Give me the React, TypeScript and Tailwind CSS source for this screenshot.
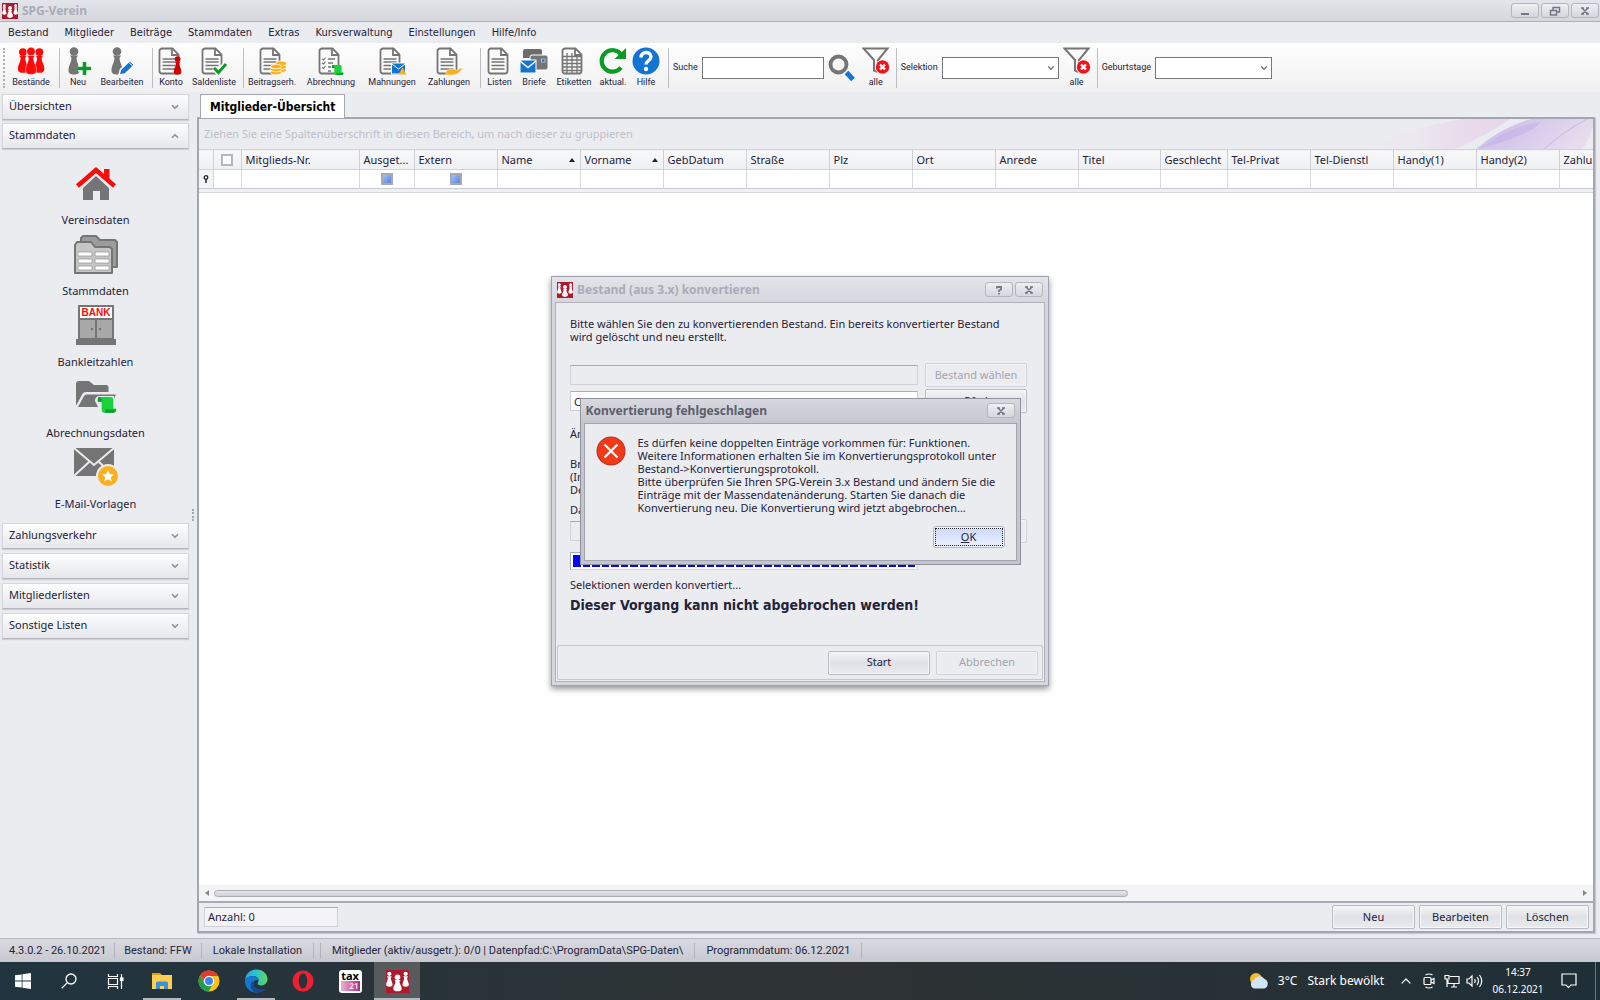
import React, { useState } from 'react'
import { ChevronDown, ChevronUp } from 'lucide-react'

const menuItems = [
  'Bestand',
  'Mitglieder',
  'Beiträge',
  'Stammdaten',
  'Extras',
  'Kursverwaltung',
  'Einstellungen',
  'Hilfe/Info'
]

const columns = [
  { title: 'Mitglieds-Nr.', width: 118 },
  { title: 'Ausget...', width: 55, check: true },
  { title: 'Extern', width: 83, check: true },
  { title: 'Name', width: 83, sorted: true },
  { title: 'Vorname', width: 83, sorted: true },
  { title: 'GebDatum', width: 83 },
  { title: 'Straße', width: 83 },
  { title: 'Plz', width: 83 },
  { title: 'Ort', width: 83 },
  { title: 'Anrede', width: 83 },
  { title: 'Titel', width: 82 },
  { title: 'Geschlecht', width: 67 },
  { title: 'Tel-Privat', width: 83 },
  { title: 'Tel-Dienstl', width: 83 },
  { title: 'Handy(1)', width: 83 },
  { title: 'Handy(2)', width: 83 },
  { title: 'Zahlungsart', width: 83 }
]

const buttonStyle =
  'rounded-[2px] border border-[#b9bac3] bg-linear-to-b from-[#f4f5f7] via-[#e0e1e6] to-[#eaebef] text-center shadow-[inset_0_0_0_1px_#f6f6f8]'
const disabledStyle =
  'rounded-[2px] border border-[#d0d1d8] bg-[#ebecf0] text-center text-[#a3a4af] shadow-[inset_0_0_0_1px_#f3f3f6]'

function Logo({ className }: { className: string }) {
  return (
    <svg viewBox="0 0 24 24" className={className}>
      <rect width="24" height="24" fill="#ad1a2d" />
      <g fill="#fff">
        <circle cx="3.5" cy="4" r="2.2" />
        <path d="M1 6.500h5l-1 2c.2 3 1.800 4 1.800 7 0 1.500-1.500 2-3.300 2-1.700 0-3.300-.5-3.300-2 0-3 1.600-4 1.800-7z" />
        <circle cx="20.500" cy="4" r="2.200" />
        <path d="M18 6.500h5l-1 2c.2 3 1.800 4 1.800 7 0 1.500-1.500 2-3.300 2-1.700 0-3.300-.5-3.300-2 0-3 1.600-4 1.800-7z" />
        <circle cx="12" cy="7.500" r="2.900" />
        <path d="M8.800 10.500h6.400l-1.200 1.800c.2 3 2.400 4 2.400 7.200 0 1.800-2 2.700-4.400 2.700s-4.400-.9-4.400-2.700c0-3.200 2.200-4.200 2.400-7.200z" />
      </g>
    </svg>
  )
}

function Pawn({ x = 0, y = 0, scale = 1, fill }: { x?: number; y?: number; scale?: number; fill: string }) {
  return (
    <g transform={`translate(${x} ${y}) scale(${scale})`} fill={fill}>
      <circle cx="6" cy="4.500" r="4.300" />
      <path d="M2 8.500h8l-1.500 2.500c.2 5 3 7 3 12.500 0 3-2.200 4-5.500 4s-5.500-1-5.500-4c0-5.500 2.800-7.500 3-12.500z" />
    </g>
  )
}

function Doc({ children, lines = true }: { children?: React.ReactNode; lines?: boolean }) {
  return (
    <svg viewBox="0 0 30 28" className="h-7 w-[30px]">
      <path
        d="M6 1.500h10.500l6 6V24a2.500 2.500 0 0 1-2.500 2.500H6A2.500 2.500 0 0 1 3.500 24V4A2.500 2.500 0 0 1 6 1.500zM16 1.500v6.500h6.500"
        fill="#fafafa"
        stroke="#757575"
        strokeWidth="1.800"
      />
      {lines && <path d="M6.500 12h13M6.500 15h13M6.500 18.500h13M6.500 22h13" stroke="#757575" strokeWidth="1.500" />}
      {children}
    </svg>
  )
}

function Scroll({ x, y, scale }: { x: number; y: number; scale: number }) {
  return (
    <g transform={`translate(${x} ${y}) scale(${scale})`}>
      <path d="M1 0h11c2 0 2.500 1 2.500 3v8H17c0 2.500-1 4-3 4H6c-2 0-2.500-1-2.500-3V4.500H0C-.5 2 0 0 1 0z" fill="#19d23a" />
      <path d="M1 0c2 0 3 1.500 2.500 4.500H0C-.5 2 0 0 1 0zM7 12h10.500c0 2-1 3-3 3H6c1 0 1.200-1 1-3z" fill="#0d9d2b" />
    </g>
  )
}

function Funnel() {
  return (
    <svg viewBox="0 0 28 29" className="h-[29px] w-7">
      <path d="M1.500 2.500h24L16 14v12l-4-1.500V14z" fill="none" stroke="#757575" strokeWidth="2" />
      <circle cx="20.500" cy="21" r="7.500" fill="#fff" />
      <circle cx="20.500" cy="21" r="6.700" fill="#f50f17" />
      <path d="M18 18.500l5 5M23 18.500l-5 5" stroke="#fff" strokeWidth="2.400" />
    </svg>
  )
}

function BestaendeIcon() {
  return (
    <svg viewBox="0 0 28 28" className="h-7 w-7">
      <Pawn x={0.5} y={1} scale={0.9} fill="#fb0a0a" />
      <Pawn x={17} y={1} scale={0.9} fill="#fb0a0a" />
      <g stroke="#fff" strokeWidth="0.500">
        <Pawn x={8} y={0} scale={1} fill="#fb0a0a" />
      </g>
    </svg>
  )
}

function NeuIcon() {
  return (
    <svg viewBox="0 0 28 28" className="h-7 w-7">
      <Pawn x={4} fill="#757575" />
      <path d="M20.500 15v13M14 21.500h13" stroke="#fff" strokeWidth="6" />
      <path d="M20.500 15v13M14 21.500h13" stroke="#0b9b25" strokeWidth="3.600" />
    </svg>
  )
}

function BearbeitenIcon() {
  return (
    <svg viewBox="0 0 28 28" className="h-7 w-7">
      <Pawn x={3} fill="#757575" />
      <path d="M11 28l1.500-5.500L22 13.500l4.500 4.500L17 27z" fill="#1474d4" stroke="#fff" strokeWidth="1.500" />
      <path d="M21 15.500l4 4" stroke="#fff" strokeWidth="1" />
    </svg>
  )
}

function Coins() {
  return (
    <g fill="#fbb01b" stroke="#fff" strokeWidth="0.800">
      <ellipse cx="24" cy="23" rx="5.500" ry="2.500" />
      <ellipse cx="24" cy="20" rx="5.500" ry="2.500" />
      <ellipse cx="24" cy="16.500" rx="5.500" ry="2.500" />
      <ellipse cx="19" cy="25.500" rx="5.500" ry="2.300" />
      <ellipse cx="19" cy="22.500" rx="5.500" ry="2.300" />
      <ellipse cx="19" cy="19.500" rx="5.500" ry="2.300" />
    </g>
  )
}

function BriefeIcon() {
  return (
    <svg viewBox="0 0 28 28" className="h-7 w-7">
      <path d="M5 2h15a2 2 0 0 1 2 2v7H3V4a2 2 0 0 1 2-2z" fill="#6c6c6c" />
      <rect x="10" y="8" width="18" height="15" rx="2" fill="#757575" stroke="#fff" />
      <rect x="21.500" y="12" width="3.500" height="3" fill="#1474d4" stroke="#fff" strokeWidth="0.500" />
      <rect x="0" y="13" width="16" height="13" fill="#1474d4" stroke="#fff" />
      <path d="M0 14l8 6.500 8-6.500" fill="none" stroke="#fff" strokeWidth="1.500" />
    </svg>
  )
}

function RefreshIcon() {
  return (
    <svg viewBox="0 0 28 28" className="h-7 w-7">
      <path d="M22 20.500A10.800 10.800 0 1 1 22.500 8" fill="none" stroke="#0b9b25" strokeWidth="4.200" />
      <path d="M27 1v11H15.500z" fill="#0b9b25" />
    </svg>
  )
}

function HilfeIcon() {
  return (
    <svg viewBox="0 0 28 28" className="h-7 w-7">
      <circle cx="14" cy="14" r="13.500" fill="#1474d4" />
      <path d="M9 10.500c0-6.500 10-6.500 10-.7 0 3.700-5 4.200-5 7.700" fill="none" stroke="#fff" strokeWidth="3.400" />
      <circle cx="14" cy="22" r="2.200" fill="#fff" />
    </svg>
  )
}

const toolGroups = [
  [{ label: 'Bestände', width: 'w-[48px]', icon: <BestaendeIcon /> }],
  [
    { label: 'Neu', width: 'w-[36px]', icon: <NeuIcon /> },
    { label: 'Bearbeiten', width: 'w-[52px]', icon: <BearbeitenIcon /> }
  ],
  [
    {
      label: 'Konto',
      width: 'w-[36px]',
      icon: (
        <Doc>
          <Pawn x={17.5} y={9} scale={0.68} fill="#d40000" />
        </Doc>
      )
    },
    {
      label: 'Saldenliste',
      width: 'w-[50px]',
      icon: (
        <Doc>
          <path d="M15 21l4.500 4.500L27 17" fill="none" stroke="#fff" strokeWidth="6" />
          <path d="M15 21l4.500 4.500L27 17" fill="none" stroke="#0b9b25" strokeWidth="3" />
        </Doc>
      )
    }
  ],
  [
    { label: 'Beitragserh.', width: 'w-[56px]', icon: <Doc><Coins /></Doc> },
    {
      label: 'Abrechnung',
      width: 'w-[62px]',
      icon: (
        <Doc lines={false}>
          <path d="M12 12h7M12 16h5M12 20h3M12 24h3" stroke="#757575" strokeWidth="1.500" />
          <path d="M6 12l1.500 1 2-2.500M6 16l1.500 1 2-2.500M6 20.500l1.500 1 2-2.500" fill="none" stroke="#757575" strokeWidth="1.200" />
          <Scroll x={16} y={18} scale={0.66} />
        </Doc>
      )
    },
    {
      label: 'Mahnungen',
      width: 'w-[60px]',
      icon: (
        <Doc>
          <rect x="14.500" y="16" width="14" height="11" fill="#1474d4" stroke="#fff" />
          <path d="M15 17l6.500 5 6.500-5" fill="none" stroke="#fff" />
          <path d="M25.500 20.500l4 7h-8z" fill="#fbb01b" />
        </Doc>
      )
    },
    {
      label: 'Zahlungen',
      width: 'w-[54px]',
      icon: (
        <Doc>
          <path d="M12 24l4-2h5.500l.5 1.500 5-2.500 2 .5-5 5-5 1.500h-7z" fill="#fbb01b" stroke="#fff" strokeWidth="0.500" />
        </Doc>
      )
    }
  ],
  [
    { label: 'Listen', width: 'w-[37px]', icon: <Doc /> },
    { label: 'Briefe', width: 'w-[32px]', icon: <BriefeIcon /> },
    {
      label: 'Etiketten',
      width: 'w-[48px]',
      icon: (
        <Doc lines={false}>
          <path d="M4 9.500h18M4 13h18M4 16.500h18M4 20h18M4 23.500h18M8 6v20M13 6v20M18 9v17" stroke="#757575" strokeWidth="1.300" />
        </Doc>
      )
    },
    { label: 'aktual.', width: 'w-[30px]', icon: <RefreshIcon /> },
    { label: 'Hilfe', width: 'w-[36px]', icon: <HilfeIcon /> }
  ]
]

const sideItems = [
  {
    label: 'Vereinsdaten',
    icon: (
      <svg viewBox="0 0 48 48" className="size-12">
        <path d="M11 28L24 16l13 12v12h-9v-9h-7v9H11z" fill="#757575" />
        <path d="M5.500 26L24 10l18.500 16" fill="none" stroke="#fb0a0a" strokeWidth="4.500" />
        <path d="M32 9h5.500v12L32 17z" fill="#fb0a0a" />
      </svg>
    )
  },
  {
    label: 'Stammdaten',
    icon: (
      <svg viewBox="0 0 48 48" className="size-12" stroke="#757575" strokeWidth="2" strokeLinejoin="round">
        <path d="M9 12V7l2-2h13l4 4h15l2 2v25H39" fill="#9c9c9c" />
        <path d="M3 42V14l2-3h14l4 5h15l2 2v24z" fill="#c6c6c6" />
        <g fill="#fff" stroke="#999" strokeWidth="0.800">
          <rect x="6" y="21" width="14" height="4" />
          <rect x="23" y="21" width="14" height="4" />
          <rect x="6" y="28" width="14" height="4" />
          <rect x="23" y="28" width="14" height="4" />
          <rect x="6" y="35" width="14" height="4" />
          <rect x="23" y="35" width="14" height="4" />
        </g>
      </svg>
    )
  },
  {
    label: 'Bankleitzahlen',
    icon: (
      <svg viewBox="0 0 48 48" className="size-12">
        <path d="M6 3h36v34h2v6H4v-6h2z" fill="#757575" />
        <rect x="8" y="5" width="32" height="11" fill="#fff" />
        <rect x="8" y="18" width="15" height="18" fill="#a8a8a8" />
        <rect x="25" y="18" width="15" height="18" fill="#a8a8a8" />
        <circle cx="20" cy="27" r="1.300" fill="#757575" />
        <circle cx="28" cy="27" r="1.300" fill="#757575" />
        <text x="24" y="14" textAnchor="middle" fontSize="10" fontWeight="bold" fontFamily="Liberation Sans" fill="#fb0a0a">
          BANK
        </text>
      </svg>
    )
  },
  {
    label: 'Abrechnungsdaten',
    icon: (
      <svg viewBox="0 0 48 48" className="size-12">
        <path d="M4 34V11q0-3 3-3h10l5 4h12q2.500 0 2.500 3v4H14q-3 0-4 3z" fill="#757575" />
        <path d="M3.500 35L11 22q1-1.500 3-1.500h29" fill="none" stroke="#ebecf0" strokeWidth="1.500" />
        <path d="M6 34l6-11q1-1.500 3-1.500h29L38 34z" fill="#757575" />
        <path d="M23 28q0-5 5-5h14v13H27z" fill="#ebecf0" />
        <Scroll x={26} y={24} scale={1.05} />
      </svg>
    )
  },
  {
    label: 'E-Mail-Vorlagen',
    icon: (
      <svg viewBox="0 0 48 48" className="size-12">
        <rect x="2" y="4" width="40" height="28" fill="#757575" />
        <path d="M2 4l20 17L42 4M2 32l15-14M42 32L27 18" fill="none" stroke="#ebecf0" strokeWidth="2" />
        <circle cx="36" cy="32" r="12" fill="#ebecf0" />
        <circle cx="36" cy="32" r="10" fill="#fbb01b" />
        <path d="M36 26l1.800 4 4.200.4-3.200 2.800 1 4.200-3.800-2.200-3.800 2.200 1-4.200-3.200-2.800 4.200-.4z" fill="#fff" />
      </svg>
    )
  }
]

function Separator() {
  return <div className="h-10 w-px bg-[#bdbdc2]" />
}

function WindowButton({ label, children }: { label: string; children: React.ReactNode }) {
  return (
    <button
      aria-label={label}
      className="flex h-[15px] w-7 items-center justify-center rounded-[3px] border border-[#b4b5bf] bg-linear-to-b from-[#eeeff2] to-[#d6d7dd]"
    >
      <svg viewBox="0 0 12 10" className="h-[10px] w-3" fill="none" stroke="#757783" strokeWidth="2">
        {children}
      </svg>
    </button>
  )
}

const closeGlyph = <path d="M3 2l6 6M9 2L3 8M2 2h3M7 2h3M2 8h3M7 8h3" strokeWidth="1.500" />

function GroupHeader({ title, open, onClick }: { title: string; open?: boolean; onClick?: () => void }) {
  const Chevron = open ? ChevronUp : ChevronDown
  return (
    <button
      onClick={onClick}
      className="flex h-[26px] w-full items-center justify-between border border-[#d6d7dd] border-b-[#b4b5be] bg-linear-to-b from-[#fdfdfd] to-[#e6e7eb] pr-2 pb-px pl-[6px] text-left shadow-[0_1px_1px_#cfd0d6]"
    >
      {title}
      <Chevron className="size-[10px] text-[#8e909a]" strokeWidth={4} />
    </button>
  )
}

function Combo({ label }: { label: string }) {
  return (
    <label className="flex items-center gap-1">
      {label}
      <span className="relative block">
        <select className="h-[22px] w-[117px] appearance-none border border-[#77787c] bg-white px-1">
          <option></option>
        </select>
        <ChevronDown className="pointer-events-none absolute top-[6px] right-[3px] size-[10px] text-[#777]" strokeWidth={3} />
      </span>
    </label>
  )
}

function Toolbar() {
  return (
    <div className="flex h-[49px] items-center bg-linear-to-b from-[#fefefe] to-[#f0f0f1] font-[Roboto,sans-serif] text-[9px] whitespace-nowrap">
      <div className="mr-[2px] ml-[3px] h-10 border-l-2 border-dotted border-[#b0b0b4]" />
      {toolGroups.map((group, index) => (
        <React.Fragment key={index}>
          <div className="flex pr-1">
            {group.map(tool => (
              <button key={tool.label} className={`flex flex-col items-center ${tool.width}`}>
                {tool.icon}
                <span className="leading-[14px]">{tool.label}</span>
              </button>
            ))}
          </div>
          <Separator />
        </React.Fragment>
      ))}
      <label className="ml-1 flex items-center gap-1">
        Suche
        <input type="text" className="h-[22px] w-[122px] border border-[#77787c] bg-white px-1" />
      </label>
      <button aria-label="Suchen" className="ml-1">
        <svg viewBox="0 0 28 28" className="size-7">
          <circle cx="10.500" cy="10.500" r="8" fill="none" stroke="#757575" strokeWidth="3.800" />
          <path d="M18.500 18.500l6.500 7" stroke="#1474d4" strokeWidth="5" />
        </svg>
      </button>
      <button className="mx-[6px] flex flex-col items-center">
        <Funnel />
        <span className="leading-[14px]">alle</span>
      </button>
      <Separator />
      <div className="ml-1">
        <Combo label="Selektion" />
      </div>
      <button className="mr-[6px] ml-1 flex flex-col items-center">
        <Funnel />
        <span className="leading-[14px]">alle</span>
      </button>
      <Separator />
      <div className="ml-1">
        <Combo label="Geburtstage" />
      </div>
    </div>
  )
}

function Sidebar() {
  const [open, setOpen] = useState(true)
  return (
    <aside className="w-[189px] shrink-0 pt-[2px] pl-[2px]">
      <div className="flex flex-col gap-[3px]">
        <GroupHeader title="Übersichten" />
        <GroupHeader title="Stammdaten" open={open} onClick={() => setOpen(!open)} />
      </div>
      {open && (
        <div className="pt-[11px] pb-2">
          {sideItems.map(item => (
            <button key={item.label} className="flex h-[71px] w-full flex-col items-center">
              {item.icon}
              <span className="leading-[23px]">{item.label}</span>
            </button>
          ))}
        </div>
      )}
      <div className="flex flex-col gap-1">
        <GroupHeader title="Zahlungsverkehr" />
        <GroupHeader title="Statistik" />
        <GroupHeader title="Mitgliederlisten" />
        <GroupHeader title="Sonstige Listen" />
      </div>
    </aside>
  )
}

function Swirl() {
  return (
    <svg viewBox="0 0 240 31" className="h-[31px] w-60">
      <defs>
        <linearGradient id="pink" x1="0" x2="1">
          <stop offset="0" stopColor="#ebecf0" />
          <stop offset="0.400" stopColor="#ebe8ef" />
          <stop offset="0.700" stopColor="#e9dcec" />
          <stop offset="1" stopColor="#e6d6eb" />
        </linearGradient>
        <linearGradient id="violet" x1="0" y1="0" x2="1" y2="0.300">
          <stop offset="0" stopColor="#cfc0ea" />
          <stop offset="0.400" stopColor="#d2c6ea" />
          <stop offset="1" stopColor="#e6dcee" />
        </linearGradient>
      </defs>
      <path d="M0 31Q60 8 110 0h47Q135 16 100 31z" fill="url(#pink)" />
      <path d="M122 31Q148 8 178 0h62v8q-4 14-12 23z" fill="url(#violet)" />
      <path d="M128 29Q154 8 188 3q-10 13-60 26z" fill="#c3b0e8" opacity="0.600" />
      <path d="M190 31q20-18 44-31" stroke="#d3bde2" strokeWidth="1.200" fill="none" />
    </svg>
  )
}

function FilterCheck({ label }: { label: string }) {
  return (
    <input
      type="checkbox"
      aria-label={label}
      className="mx-auto block size-3 appearance-none border-2 border-[#a6a9b6] bg-linear-to-br from-[#a5c1f5] to-[#5a82d8]"
    />
  )
}

function MemberGrid() {
  return (
    <table className="w-full table-fixed border-collapse">
      <colgroup>
        <col className="w-[14px]" />
        <col className="w-7" />
        {columns.map(column => (
          <col key={column.title} style={{ width: column.width }} />
        ))}
      </colgroup>
      <thead>
        <tr className="h-5 border-y border-[#d3d4da] bg-linear-to-b from-[#f8f8f9] to-[#eff0f3]">
          <th className="border-r border-[#cfd0d7]"></th>
          <th className="border-r border-[#cfd0d7]">
            <input
              type="checkbox"
              aria-label="Alle auswählen"
              className="mx-auto block size-3 appearance-none border-2 border-[#b5b6be] bg-white"
            />
          </th>
          {columns.map(column => (
            <th key={column.title} className="overflow-hidden border-r border-[#cfd0d7] pr-[5px] pl-1 text-left leading-4 font-normal whitespace-nowrap">
              <span className="flex items-center justify-between">
                {column.title}
                {column.sorted && (
                  <svg viewBox="0 0 6 4" className="h-1 w-[6px]">
                    <path d="M3 0l3 4H0z" fill="#23232f" />
                  </svg>
                )}
              </span>
            </th>
          ))}
        </tr>
      </thead>
      <tbody>
        <tr className="h-[19px] border-b border-[#c9cad2]">
          <td className="border-r border-[#d8d9df] bg-[#f3f4f6]">
            <svg viewBox="0 0 8 8" className="mx-auto size-2">
              <circle cx="4" cy="2.500" r="1.800" fill="none" stroke="#23232f" strokeWidth="1.300" />
              <path d="M4 4v4" stroke="#23232f" strokeWidth="1.500" />
            </svg>
          </td>
          <td className="border-r border-[#d8d9df]"></td>
          {columns.map(column => (
            <td key={column.title} className="border-r border-[#d8d9df]">
              {column.check && <FilterCheck label={column.title} />}
            </td>
          ))}
        </tr>
      </tbody>
    </table>
  )
}

function MainPanel() {
  return (
    <main className="flex min-w-0 flex-1 flex-col pr-[5px] pb-[5px]">
      <div className="pl-[3px]">
        <button className="relative top-px mt-px h-6 border border-b-0 border-[#a5a7b2] bg-white px-[9px] font-['DejaVu_Sans_Condensed',sans-serif] text-[12px] font-bold text-black">
          Mitglieder-Übersicht
        </button>
      </div>
      <section className="flex flex-1 flex-col border-2 border-[#a3a5b0] bg-white shadow-[1px_1px_1px_#c9cad0]">
        <div className="flex h-[30px] items-center justify-between overflow-hidden bg-[#ebecf0] pl-[5px] text-[#bfc0c9]">
          Ziehen Sie eine Spaltenüberschrift in diesen Bereich, um nach dieser zu gruppieren
          <Swirl />
        </div>
        <div className="overflow-hidden">
          <MemberGrid />
        </div>
        <div className="h-1 border-b border-[#d8d9df] bg-[#eff0f3]" />
        <div className="flex-1" />
        <div className="flex h-4 items-center gap-[5px] bg-[#f4f4f6] px-[6px]">
          <svg viewBox="0 0 4 6" className="h-[6px] w-1">
            <path d="M4 0v6L0 3z" fill="#85868f" />
          </svg>
          <div className="flex-1">
            <div className="h-[7px] w-[67%] rounded-full border border-[#a9abb5] bg-linear-to-b from-[#e4e5ea] to-[#d0d1d8]" />
          </div>
          <svg viewBox="0 0 4 6" className="h-[6px] w-1">
            <path d="M0 0v6l4-3z" fill="#85868f" />
          </svg>
        </div>
        <div className="flex h-[30px] items-center gap-1 border-t-2 border-[#a9abb6] bg-[#ebecf0] pr-1 pl-[5px]">
          <div className="mr-auto h-5 w-[134px] border border-[#d0d1d8] border-t-[#a9abb5] bg-[#f4f4f7] px-[3px] leading-[18px]">Anzahl: 0</div>
          <button className={`${buttonStyle} h-6 w-[83px]`}>Neu</button>
          <button className={`${buttonStyle} h-6 w-[83px]`}>Bearbeiten</button>
          <button className={`${buttonStyle} h-6 w-[83px]`}>Löschen</button>
        </div>
      </section>
    </main>
  )
}

function ConvertDialog() {
  return (
    <div
      role="dialog"
      aria-label="Bestand (aus 3.x) konvertieren"
      className="col-start-1 row-start-1 w-[498px] border border-[#a2a3ae] bg-linear-to-b from-[#e3e4e9] to-[#d6d7dd] to-[26px] px-[3px] pb-[3px] shadow-[0_3px_6px_#0000006b]"
    >
      <div className="flex h-[25px] items-center gap-[2px] pr-[2px] pl-[2px]">
        <Logo className="size-4" />
        <h2 className="ml-[2px] flex-1 text-[12px] font-bold text-[#a9abb7]">Bestand (aus 3.x) konvertieren</h2>
        <WindowButton label="Hilfe">
          <path d="M4 3.500V2h4v2.500L6 5.500V7M6 8v1.500" strokeWidth="1.800" />
        </WindowButton>
        <WindowButton label="Schließen">{closeGlyph}</WindowButton>
      </div>
      <div className="border border-[#b0b1bb] bg-[#ebecf0]">
        <div className="h-[341px] px-[14px] pt-[14px]">
          <p className="leading-[13px]">
            Bitte wählen Sie den zu konvertierenden Bestand. Ein bereits konvertierter Bestand
            <br />
            wird gelöscht und neu erstellt.
          </p>
          <div className="mt-5 flex items-center gap-[7px]">
            <input aria-label="Bestand" disabled className="h-5 min-w-0 flex-1 border border-[#d0d1d8] border-t-[#a9abb5] bg-[#ebecf0] px-1" />
            <button disabled className={`${disabledStyle} mr-[3px] h-6 w-[102px]`}>
              Bestand wählen
            </button>
          </div>
          <div className="mt-[2px] flex items-center gap-[7px]">
            <input
              aria-label="Zielpfad"
              defaultValue="C:\ProgramData\SPG-Daten\Bestand\Verein"
              className="h-5 min-w-0 flex-1 border border-[#d0d1d8] border-t-[#a9abb5] bg-white px-[3px]"
            />
            <button className={`${buttonStyle} mr-[3px] h-6 w-[102px]`}>Pfad</button>
          </div>
          <p className="mt-[14px] leading-[14px]">Ändern</p>
          <p className="mt-4 leading-[13px]">
            Brief
            <br />
            (Info)
            <br />
            Deckblatt
          </p>
          <p className="mt-[7px] leading-[13px]">Datei</p>
          <div className="mt-[3px] flex items-center gap-[7px]">
            <input aria-label="Datei" disabled className="h-5 min-w-0 flex-1 border border-[#d0d1d8] border-t-[#a9abb5] bg-[#ebecf0] px-1" />
            <button disabled className={`${disabledStyle} mr-[3px] h-6 w-[102px]`}></button>
          </div>
          <div
            role="progressbar"
            aria-label="Konvertierung"
            className="mt-[9px] mr-[112px] flex h-[18px] gap-[2px] border border-[#d5d6dc] border-t-[#a9abb5] border-l-[#a9abb5] bg-white p-[2px]"
          >
            {Array.from({ length: 36 }, (_, i) => (
              <span key={i} className="flex-1 bg-[#0505f5]" />
            ))}
          </div>
          <p className="mt-2 leading-[14px]">Selektionen werden konvertiert...</p>
          <p className="mt-1 font-['DejaVu_Sans_Condensed',sans-serif] text-[14px] leading-[18px] font-bold">
            Dieser Vorgang kann nicht abgebrochen werden!
          </p>
        </div>
        <div className="m-px flex h-[35px] items-center justify-end gap-[6px] rounded-[2px] border border-[#c6c7cf] pr-1">
          <button className={`${buttonStyle} h-6 w-[102px]`}>Start</button>
          <button disabled className={`${disabledStyle} h-6 w-[102px]`}>
            Abbrechen
          </button>
        </div>
      </div>
    </div>
  )
}

function ErrorDialog() {
  return (
    <div
      role="alertdialog"
      aria-label="Konvertierung fehlgeschlagen"
      className="col-start-1 row-start-1 w-[441px] border border-[#8f919d] bg-linear-to-b from-[#d8d9df] to-[#c4c5ce] to-[25px] px-[3px] pb-[3px]"
    >
      <div className="flex h-[24px] items-center justify-between px-[2px]">
        <h2 className="text-[12px] font-bold text-[#5c5e6d]">Konvertierung fehlgeschlagen</h2>
        <WindowButton label="Schließen">{closeGlyph}</WindowButton>
      </div>
      <div className="flex flex-col border border-[#a2a4b0] bg-[#ebecf0] px-[11px] py-3">
        <div className="flex gap-3">
          <svg viewBox="0 0 30 30" className="size-[30px]">
            <circle cx="15" cy="15" r="14.500" fill="#b8342a" />
            <circle cx="15" cy="15" r="13.500" fill="#f23a18" />
            <path d="M8.500 8.500l13 13M21.500 8.500l-13 13" stroke="#fff" strokeWidth="2.200" />
          </svg>
          <p className="leading-[13px] whitespace-nowrap">
            Es dürfen keine doppelten Einträge vorkommen für: Funktionen.
            <br />
            Weitere Informationen erhalten Sie im Konvertierungsprotokoll unter
            <br />
            Bestand-&gt;Konvertierungsprotokoll.
            <br />
            Bitte überprüfen Sie Ihren SPG-Verein 3.x Bestand und ändern Sie die
            <br />
            Einträge mit der Massendatenänderung. Starten Sie danach die
            <br />
            Konvertierung neu. Die Konvertierung wird jetzt abgebrochen...
          </p>
        </div>
        <button className="mt-3 h-[22px] w-[72px] self-end rounded-[3px] border border-[#b4b5bf] bg-[#f4f6fd] p-px">
          <span className="block border border-dotted border-[#23232f] bg-linear-to-b from-[#cddafb] to-[#e9effe] leading-4">
            <u>O</u>K
          </span>
        </button>
      </div>
    </div>
  )
}

function StatusBar() {
  return (
    <footer className="flex h-6 items-center border-t border-[#b7b8c1] bg-linear-to-b from-[#d9dae0] to-[#c8c9d0] pt-px pl-[9px] font-[Roboto,sans-serif] whitespace-nowrap">
      <span className="border-r border-[#b2b3bd] pr-2">4.3.0.2 - 26.10.2021</span>
      <span className="border-r border-[#b2b3bd] px-[9px]">Bestand: FFW</span>
      <span className="border-r border-[#b2b3bd] px-[11px]">Lokale Installation</span>
      <span className="ml-[6px] border-x border-[#b2b3bd] px-[11px]">
        Mitglieder (aktiv/ausgetr.): 0/0 | Datenpfad:C:\ProgramData\SPG-Daten\
      </span>
      <span className="border-r border-[#b2b3bd] px-[11px]">Programmdatum: 06.12.2021</span>
    </footer>
  )
}

function TaskButton({ label, running, active, children }: { label: string; running?: boolean; active?: boolean; children: React.ReactNode }) {
  return (
    <button aria-label={label} className={`relative flex h-full w-[46px] items-center justify-center ${active ? 'bg-[#575b5d]' : ''}`}>
      {children}
      {running && <span className="absolute inset-x-1 bottom-0 h-[2px] bg-[#b3b9bc]" />}
      {active && <span className="absolute inset-x-0 bottom-0 h-[2px] bg-[#b3b9bc]" />}
    </button>
  )
}

function Taskbar() {
  return (
    <nav className="flex h-[38px] items-center bg-linear-to-r from-[#20343f] via-[#2f3333] to-[#1f2f37] font-['Noto_Sans',sans-serif] text-white">
      <TaskButton label="Start">
        <svg viewBox="0 0 16 16" className="size-4" fill="#fff">
          <path d="M0 2.300l6.700-.9v6.200H0zM7.500 1.300L16 0v7.600H7.500zM0 8.400h6.700v6.200L0 13.700zM7.500 8.400H16V16l-8.500-1.300z" />
        </svg>
      </TaskButton>
      <TaskButton label="Suche">
        <svg viewBox="0 0 16 16" className="size-4" fill="none" stroke="#fff" strokeWidth="1.300">
          <circle cx="10" cy="6" r="5" />
          <path d="M6.400 9.600L.7 15.300" />
        </svg>
      </TaskButton>
      <TaskButton label="Aktive Anwendungen">
        <svg viewBox="0 0 17 17" className="size-[17px]" fill="none" stroke="#fff" strokeWidth="1.200">
          <path d="M1.500 1v2.500h9V1M1.500 16v-2.500h9V16M1.500 5.500h9v6h-9zM14.500 1v4M14.500 8v8" />
          <rect x="13.500" y="5" width="2.500" height="2.500" fill="#fff" />
        </svg>
      </TaskButton>
      <div className="ml-px flex h-full gap-px">
        <TaskButton label="Explorer" running>
          <svg viewBox="0 0 22 20" className="h-5 w-[22px]">
            <path d="M1 2h8l2 2h10v5H1z" fill="#e59b0c" />
            <path d="M1 4h20v14H1z" fill="#fccf52" />
            <path d="M5 18v-6q0-1.500 1.500-1.500h9q1.500 0 1.500 1.500v6h-4v-3H9v3z" fill="#3c91dc" />
          </svg>
        </TaskButton>
        <TaskButton label="Chrome">
          <svg viewBox="0 0 22 22" className="size-[22px]">
            <circle cx="11" cy="11" r="10.500" fill="#fbc116" />
            <path d="M2 5.500A10.500 10.500 0 0 1 20.200 6H11a5 5 0 0 0-4.700 6z" fill="#e33b2e" />
            <path d="M2 5.500A10.500 10.500 0 0 0 10.500 21.500L15 14a5 5 0 0 1-8.300-.5z" fill="#229d4c" />
            <circle cx="11" cy="11" r="5.200" fill="#fff" />
            <circle cx="11" cy="11" r="4" fill="#3e83f0" />
          </svg>
        </TaskButton>
        <TaskButton label="Edge" running>
          <svg viewBox="0 0 24 24" className="size-6">
            <defs>
              <linearGradient id="edgeTop" x1="0" x2="1">
                <stop offset="0" stopColor="#2aa9e6" />
                <stop offset="0.500" stopColor="#2dc3cf" />
                <stop offset="1" stopColor="#62d857" />
              </linearGradient>
            </defs>
            <path d="M1 11C2 4 7 .5 12.500.5 19 .5 23.500 5 23.500 10c0 4-3 6.500-6.500 6.500-3 0-4-1.500-3-3C16 10 13 7 9 7 5 7 2 9 1 11z" fill="url(#edgeTop)" />
            <path d="M1 11C2 9 5 7 9 7c3.500 0 5.500 2 5.500 4.500C12 10 9.500 12 9.500 15c0 4 4 6.500 8 6 2 0 3-.6 4-1C20 22 16.500 23.500 12.500 23.500 5 23.500.5 17.500 1 11z" fill="#1577cf" />
            <path d="M9.500 15c0 4 5 6.500 12 5-3 3.500-8 4-11.500 3C6 21 5 14 9.500 11.500z" fill="#114d97" />
          </svg>
        </TaskButton>
        <TaskButton label="Opera">
          <svg viewBox="0 0 22 22" className="size-[22px]">
            <path d="M11 .5a10.500 10.500 0 1 0 0 21 10.500 10.500 0 0 0 0-21zm0 3c2.700 0 4.200 3.500 4.200 7.500s-1.500 7.500-4.200 7.500S6.800 15 6.800 11 8.300 3.500 11 3.500z" fill="#f2202f" fillRule="evenodd" />
          </svg>
        </TaskButton>
        <TaskButton label="tax 2021">
          <span className="flex h-[23px] w-[23px] flex-col items-center rounded-[3px] bg-white text-[11px] leading-[11px] font-bold text-black">
            tax
            <span className="w-[19px] bg-linear-to-r from-[#e7b3d4] to-[#b0257e] pr-px text-right text-[8px] leading-[10px] text-[#f3d5e7]">21</span>
          </span>
        </TaskButton>
        <TaskButton label="SPG-Verein" active>
          <Logo className="size-[23px]" />
        </TaskButton>
      </div>
      <div className="ml-auto flex h-full items-center">
        <button className="flex items-center text-[12px]">
          <svg viewBox="0 0 20 16" className="h-4 w-5">
            <circle cx="7" cy="6" r="6" fill="#fbb928" />
            <path d="M5 15.500a4.500 4.500 0 0 1 0-8.500 6 6 0 0 1 10.500-1A5 5 0 0 1 15 15.500z" fill="#cfe6fa" />
          </svg>
          <span className="ml-[9px]">3°C</span>
          <span className="ml-[10px]">Stark bewölkt</span>
        </button>
        <ChevronUp className="ml-[14px] size-4" strokeWidth={1.8} />
        <svg viewBox="0 0 14 16" className="ml-2 h-4 w-[14px]" fill="none" stroke="#fff" strokeWidth="1.200">
          <rect x="2" y="4.500" width="7" height="7" rx="1" />
          <path d="M9 7l3-1.500v5L9 9M3.500 2q3.500-2 7 0M3.500 14q3.500 2 7 0" />
        </svg>
        <svg viewBox="0 0 16 14" className="ml-2 h-[14px] w-4" fill="none" stroke="#fff" strokeWidth="1.200">
          <path d="M6 2.500h9v7H4V6M7 13h6M10 9.500V13M1 1.500h4V5H1zM3 5v8" />
        </svg>
        <svg viewBox="0 0 17 14" className="ml-[6px] h-[14px] w-[17px]" fill="none" stroke="#fff" strokeWidth="1.200">
          <path d="M1 5h2l3-3v10L3 9H1zM8.500 5q1.500 2 0 4M11 3q3 4 0 8M13.500 1q4.500 6 0 12" />
        </svg>
        <time className="ml-2 w-[54px] text-center text-[10px] leading-[17px]">
          14:37
          <br />
          06.12.2021
        </time>
        <button aria-label="Benachrichtigungen" className="mr-[18px] ml-4">
          <svg viewBox="0 0 16 16" className="size-4" fill="none" stroke="#fff" strokeWidth="1.200">
            <path d="M1 1h14v11h-5l-2.500 2.500L5 12H1z" />
          </svg>
        </button>
        <div className="mr-1 h-full w-px bg-[#6b757a]" />
      </div>
    </nav>
  )
}

export default function App() {
  return (
    <div className="flex min-h-screen flex-col overflow-hidden bg-[#ebecf0] font-['Noto_Sans',sans-serif] text-[11px] text-[#23233a]">
      <div className="relative flex flex-1 flex-col">
        <header className="flex h-[22px] items-center gap-[2px] border-b border-[#adaeb7] bg-linear-to-b from-[#e4e5ea] to-[#d6d7dd] pr-px pl-[2px]">
          <Logo className="size-4" />
          <h1 className="ml-[2px] flex-1 text-[12px] font-bold text-[#a9abb7]">SPG-Verein</h1>
          <WindowButton label="Minimieren">
            <path d="M2 8h8" />
          </WindowButton>
          <WindowButton label="Wiederherstellen">
            <path d="M4 4V1.500h6.500V6H8M1.500 4.500H7.500V9H1.500z" strokeWidth="1.500" />
          </WindowButton>
          <WindowButton label="Schließen">{closeGlyph}</WindowButton>
        </header>
        <div className="flex h-[21px] items-center gap-4 pt-[2px] pl-2 font-['DejaVu_Sans_Condensed',sans-serif]">
          {menuItems.map(item => (
            <button key={item}>{item}</button>
          ))}
        </div>
        <Toolbar />
        <div className="flex flex-1">
          <Sidebar />
          <div className="flex w-2 shrink-0 items-center justify-center">
            <div className="h-3 border-l-2 border-dotted border-[#a3a4ad]" />
          </div>
          <MainPanel />
        </div>
        <StatusBar />
        <div className="absolute inset-0 grid place-content-center place-items-center">
          <ConvertDialog />
          <ErrorDialog />
        </div>
      </div>
      <Taskbar />
    </div>
  )
}
